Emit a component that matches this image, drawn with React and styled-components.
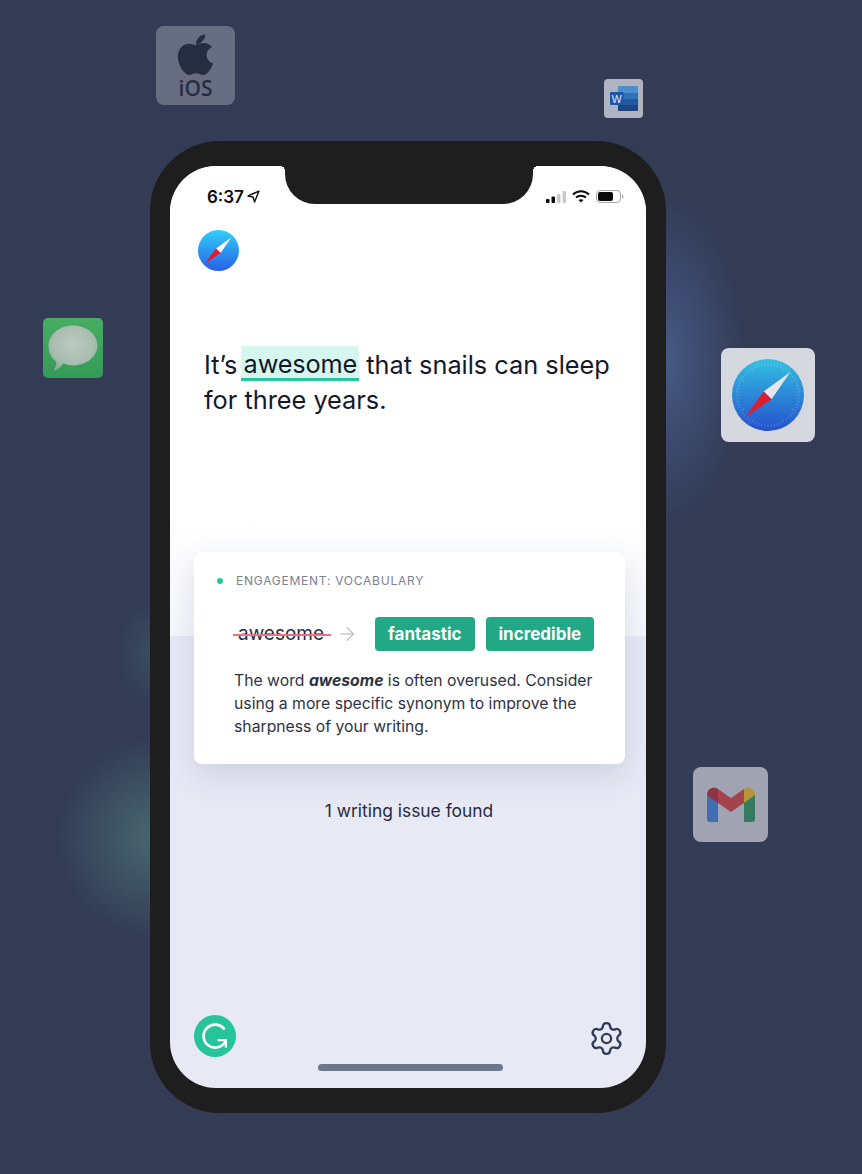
import React from 'react'
import styled, { createGlobalStyle } from 'styled-components'
import { Settings, ArrowRight } from 'lucide-react'

const GlobalStyle = createGlobalStyle`
  html, body {
    margin: 0;
    padding: 0;
    background: #333b55;
  }
  * {
    box-sizing: border-box;
  }
`

const Page = styled.div`
  position: relative;
  width: 862px;
  height: 1174px;
  padding: 141px 0 0 150px;
  overflow: hidden;
  background: #333b55;
  font-family: Inter, "Liberation Sans", sans-serif;
`

// soft colour patches behind the phone
const Glow = styled.div`
  position: absolute;
  left: ${p => p.$x}px;
  top: ${p => p.$y}px;
  width: ${p => p.$w}px;
  height: ${p => p.$h}px;
  background: radial-gradient(closest-side, ${p => p.$color}, ${p => p.$color}00);
`

const FloatTile = styled.div`
  position: absolute;
  left: ${p => p.$x}px;
  top: ${p => p.$y}px;
  width: ${p => p.$size}px;
  height: ${p => p.$size}px;
  border-radius: ${p => p.$radius}px;
  background: ${p => p.$bg};
  display: flex;
  flex-direction: column;
  align-items: center;
  justify-content: center;
`

const IosLabel = styled.span`
  font-family: "Open Sans", sans-serif;
  font-size: 21px;
  font-weight: 600;
  line-height: 20px;
  color: #262d42;
  margin-top: 3px;
`

const Phone = styled.div`
  position: relative;
  width: 516px;
  height: 972px;
  padding: 25px 20px;
  border-radius: 70px;
  background: #1e1e1e;
`

const Screen = styled.div`
  position: relative;
  width: 476px;
  height: 922px;
  border-radius: 46px;
  overflow: hidden;
  display: flex;
  flex-direction: column;
  background: #e7e9f5;
`

const Notch = styled.div`
  position: absolute;
  top: 0;
  left: 115px;
  width: 248px;
  height: 38px;
  background: #1e1e1e;
  border-radius: 0 0 30px 30px;

  &::before,
  &::after {
    content: '';
    position: absolute;
    top: 0;
    width: 5px;
    height: 5px;
  }
  &::before {
    left: -5px;
    background: radial-gradient(circle at 0 100%, transparent 5px, #1e1e1e 5px);
  }
  &::after {
    right: -5px;
    background: radial-gradient(circle at 100% 100%, transparent 5px, #1e1e1e 5px);
  }
`

const UpperArea = styled.div`
  height: 470px;
  padding: 0 28px;
  background: linear-gradient(#fff 0, #fff 355px, #f5f6fb 470px);
`

const StatusBar = styled.div`
  height: 64px;
  margin: 0 -6px 0 9px;
  padding-bottom: 3px;
  display: flex;
  align-items: center;
  justify-content: space-between;
`

const Time = styled.div`
  display: flex;
  align-items: center;
  gap: 3px;
  font-size: 17px;
  font-weight: 600;
  color: #0b0b0b;
`

const StatusIcons = styled.div`
  display: flex;
  align-items: center;
  gap: 6px;
`

const Sentence = styled.p`
  margin: 72px 0 0 6px;
  width: 420px;
  font-size: 25.3px;
  line-height: 35px;
  color: #14182a;
`

const Highlight = styled.span`
  display: inline-block;
  height: 35px;
  margin: -1px 0 0 -4px;
  padding: 0 2px 0 3px;
  line-height: 35px;
  letter-spacing: -0.15px;
  vertical-align: top;
  background: #d5f7ef;
  border-bottom: 3px solid #26c79c;
`

const LowerArea = styled.div`
  flex: 1;
  display: flex;
  flex-direction: column;
  align-items: center;
  justify-content: space-between;
  padding: 164px 24px 19px;
`

const IssueCount = styled.div`
  margin-left: 2px;
  font-size: 17.4px;
  line-height: 22px;
  color: #272c42;
`

const Footer = styled.div`
  width: 100%;
  display: flex;
  align-items: center;
  justify-content: space-between;
  margin-bottom: 12px;
`

const GearWrap = styled.div`
  display: flex;
  margin: 5px -3px 0 0;
  color: #333b55;
`

const HomeBar = styled.div`
  position: absolute;
  left: 148px;
  bottom: 17px;
  width: 185px;
  height: 7px;
  border-radius: 4px;
  background: #6e768d;
`

const Card = styled.div`
  position: absolute;
  left: 24px;
  top: 386px;
  width: 431px;
  height: 212px;
  padding: 21px 20px 0 23px;
  border-radius: 8px;
  background: #fff;
  box-shadow: 0 12px 30px rgba(80, 88, 130, 0.16);
`

const CardLabel = styled.div`
  display: flex;
  align-items: center;
  gap: 13px;
  font-size: 12px;
  line-height: 16px;
  letter-spacing: 0.75px;
  color: #7a8096;
`

const Dot = styled.span`
  width: 6px;
  height: 6px;
  border-radius: 50%;
  background: #26c79c;
`

const SuggestionRow = styled.div`
  display: flex;
  align-items: center;
  margin: 28px 0 0 16px;
`

const Struck = styled.span`
  position: relative;
  font-size: 19px;
  line-height: 34px;
  color: #272c42;
  padding: 0 7px 0 5px;

  &::after {
    content: '';
    position: absolute;
    left: 0;
    right: 0;
    top: 17px;
    height: 2px;
    background: #ec6f85;
  }
`

const ArrowWrap = styled.span`
  display: flex;
  margin-left: 5px;
  margin-right: 17px;
  color: #a9add0;
`

const Chip = styled.span`
  height: 34px;
  padding: 0 ${p => p.$pad}px;
  margin-right: 11px;
  border-radius: 4px;
  background: #22a884;
  color: #fff;
  font-size: 17px;
  font-weight: 700;
  line-height: 34px;
`

const Explain = styled.p`
  margin: 18px 0 0 17px;
  font-size: 15.75px;
  line-height: 23px;
  color: #2e3246;
`

const AppleIcon = () => (
  <svg width="40" height="42" viewBox="0 0 22 25" preserveAspectRatio="none" fill="#262d42">
    <path d="M11.200 7.300c-1.300 0-2.600-.9-4-.9C4.300 6.400 1 8.900 1 14c0 5 3.500 11 6.200 11 1.400 0 2.400-1 3.900-1 1.600 0 2.400 1 3.900 1 2.200 0 4.400-3.600 5.400-6.800-2.400-1-3.600-3-3.600-5.200 0-2.100 1.200-3.700 3-4.700-1.300-1.700-3-2.400-4.900-2.400-1.500 0-2.500.9-3.700.4z" />
    <path d="M11 6.500c0-3 2.200-5.400 5-5.800.2 3.100-2.200 5.700-5 5.800z" />
  </svg>
)

const WordIcon = () => (
  <svg width="28" height="25" viewBox="0 0 28 25">
    <path d="M8 1a1 1 0 0 1 1-1h18a1 1 0 0 1 1 1v6H8z" fill="#4a8ecb" />
    <rect x="8" y="7" width="20" height="6" fill="#2f72b8" />
    <rect x="8" y="13" width="20" height="6" fill="#23599f" />
    <path d="M8 19h20v5a1 1 0 0 1-1 1H9a1 1 0 0 1-1-1z" fill="#1c4585" />
    <rect x="0" y="6" width="13.500" height="13" rx="1" fill="#2056a6" />
    <text x="6.750" y="16.500" textAnchor="middle" fontFamily="Liberation Sans, sans-serif" fontSize="10.500" fill="#e8eef8">W</text>
  </svg>
)

const Compass = ({ size, ticks }) => {
  const marks = []
  if (ticks) {
    for (let i = 0; i < 60; i++) {
      marks.push(
        <line
          key={i}
          x1="50"
          y1="5"
          x2="50"
          y2={i % 5 === 0 ? 12 : 9}
          stroke="#fff"
          strokeOpacity="0.35"
          strokeWidth="0.7"
          transform={`rotate(${i * 6} 50 50)`}
        />
      )
    }
  }
  const id = ticks ? 'safariBig' : 'safariSmall'
  return (
    <svg width={size} height={size} viewBox="0 0 100 100">
      <defs>
        <linearGradient id={id} x1="0" y1="0" x2="0" y2="1">
          <stop offset="0" stopColor={ticks ? '#33c0e2' : '#2fd0fa'} />
          <stop offset="1" stopColor={ticks ? '#2450cc' : '#2a5fe8'} />
        </linearGradient>
      </defs>
      <circle cx="50" cy="50" r="50" fill={`url(#${id})`} />
      {marks}
      <polygon points="81,18 44,45 55,56" fill={ticks ? '#e4e6ec' : '#fff'} />
      <polygon points="18,81 44,45 55,56" fill={ticks ? '#dc1f30' : '#f5141f'} />
    </svg>
  )
}

const MessageIcon = () => (
  <svg width="50" height="46" viewBox="0 0 50 46">
    <defs>
      <radialGradient id="bubble" cx="0.5" cy="0.42" r="0.6">
        <stop offset="0" stopColor="#bccac1" />
        <stop offset="0.7" stopColor="#aabdb1" />
        <stop offset="1" stopColor="#8cae9a" />
      </radialGradient>
    </defs>
    <path d="M15 38.500c-2.500 4-5.500 6.500-10 7 2-1.800 3.200-4.500 3.400-8.500C3.500 33.500.5 27.500.5 20.500.5 9.500 11.500.5 25 .5s24.500 9 24.500 20S38.500 40.500 25 40.500c-3.500 0-7-.700-10-2z" fill="url(#bubble)" />
  </svg>
)

const GmailIcon = () => (
  <svg width="48" height="35" viewBox="0 0 48 35">
    <path d="M0 8v24a3 3 0 0 0 3 3h8V13z" fill="#416eb0" />
    <path d="M48 8v24a3 3 0 0 1-3 3h-8V13z" fill="#357b60" />
    <path d="M11 2L24 11 37 2V16L24 25 11 16z" fill="#a3434d" />
    <path d="M0 8C0 1 7-1 11 2V16L0 8z" fill="#8f3241" />
    <path d="M48 8C48 1 41-1 37 2V16L48 8z" fill="#b8923c" />
  </svg>
)

const GrammarlyLogo = () => (
  <svg width="42" height="42" viewBox="0 0 42 42">
    <circle cx="21" cy="21" r="21" fill="#26c49a" />
    <path
      d="M30.500 14.500A11.500 11.500 0 1 0 31.500 26"
      fill="none"
      stroke="#fff"
      strokeWidth="2.600"
    />
    <path d="M23.500 24H33V32.500H30.700V26.300H23.500z" fill="#fff" />
  </svg>
)

const Signal = () => (
  <svg width="20" height="12" viewBox="0 0 20 12">
    <rect x="0" y="8" width="3.500" height="4" rx="1" fill="#0b0b0b" />
    <rect x="5.500" y="5.500" width="3.500" height="6.500" rx="1" fill="#0b0b0b" />
    <rect x="11" y="3" width="3.500" height="9" rx="1" fill="#c9c9c9" />
    <rect x="16.500" y="0" width="3.500" height="12" rx="1" fill="#c9c9c9" />
  </svg>
)

const Wifi = () => (
  <svg width="18" height="13" viewBox="0 0 18 13" fill="none" stroke="#0b0b0b" strokeWidth="2">
    <path d="M1 4.500C5.500 0 12.500 0 17 4.500" />
    <path d="M4 7.500C6.800 5 11.200 5 14 7.500" />
    <path d="M9 12.500L6.500 10c1.500-1 3.500-1 5 0z" fill="#0b0b0b" stroke="none" />
  </svg>
)

const Battery = () => (
  <svg width="28" height="13" viewBox="0 0 28 13">
    <rect x="0.500" y="0.500" width="24" height="12" rx="3.500" fill="none" stroke="#a9a9a9" />
    <rect x="2" y="2" width="15" height="9" rx="2" fill="#0b0b0b" />
    <path d="M26 4.500c1 .3 1.500 1 1.500 2s-.5 1.700-1.500 2z" fill="#a9a9a9" />
  </svg>
)

const LocationArrow = () => (
  <svg width="13" height="13" viewBox="0 0 12 12" fill="none" stroke="#0b0b0b" strokeWidth="1.300" strokeLinejoin="round">
    <path d="M11 1L1 5.500l4.500 1L7 11z" />
  </svg>
)

export default function App() {
  return (
    <Page>
      <GlobalStyle />
      <Glow $x={585} $y={195} $w={160} $h={330} $color="#475985" />
      <Glow $x={55} $y={735} $w={210} $h={205} $color="#48696f" />
      <Glow $x={115} $y={600} $w={80} $h={105} $color="#3a4f60" />

      <FloatTile $x={156} $y={26} $size={79} $radius={8} $bg="#686e82">
        <AppleIcon />
        <IosLabel>iOS</IosLabel>
      </FloatTile>
      <FloatTile $x={604} $y={79} $size={39} $radius={4} $bg="#b0b3c0">
        <WordIcon />
      </FloatTile>
      <FloatTile $x={43} $y={318} $size={60} $radius={5} $bg="linear-gradient(#48ad63, #349b56)">
        <MessageIcon />
      </FloatTile>
      <FloatTile $x={721} $y={348} $size={94} $radius={8} $bg="#d6d8e0">
        <Compass size={72} ticks />
      </FloatTile>
      <FloatTile $x={693} $y={767} $size={75} $radius={8} $bg="#a0a3b1">
        <GmailIcon />
      </FloatTile>

      <Phone>
        <Screen>
          <Notch />
          <UpperArea>
            <StatusBar>
              <Time>
                6:37
                <LocationArrow />
              </Time>
              <StatusIcons>
                <Signal />
                <Wifi />
                <Battery />
              </StatusIcons>
            </StatusBar>
            <Compass size={41} />
            <Sentence>
              It’s <Highlight>awesome</Highlight> that snails can sleep for three years.
            </Sentence>
          </UpperArea>
          <LowerArea>
            <IssueCount>1 writing issue found</IssueCount>
            <Footer>
              <GrammarlyLogo />
              <GearWrap>
                <Settings size={37} strokeWidth={1.5} />
              </GearWrap>
            </Footer>
          </LowerArea>
          <HomeBar />
          <Card>
            <CardLabel>
              <Dot />
              ENGAGEMENT: VOCABULARY
            </CardLabel>
            <SuggestionRow>
              <Struck>awesome</Struck>
              <ArrowWrap>
                <ArrowRight size={22} strokeWidth={1.1} />
              </ArrowWrap>
              <Chip $pad={13}>fantastic</Chip>
              <Chip $pad={13}>incredible</Chip>
            </SuggestionRow>
            <Explain>
              The word <b><i>awesome</i></b> is often overused. Consider using a more specific synonym to improve the sharpness of your writing.
            </Explain>
          </Card>
        </Screen>
      </Phone>
    </Page>
  )
}
